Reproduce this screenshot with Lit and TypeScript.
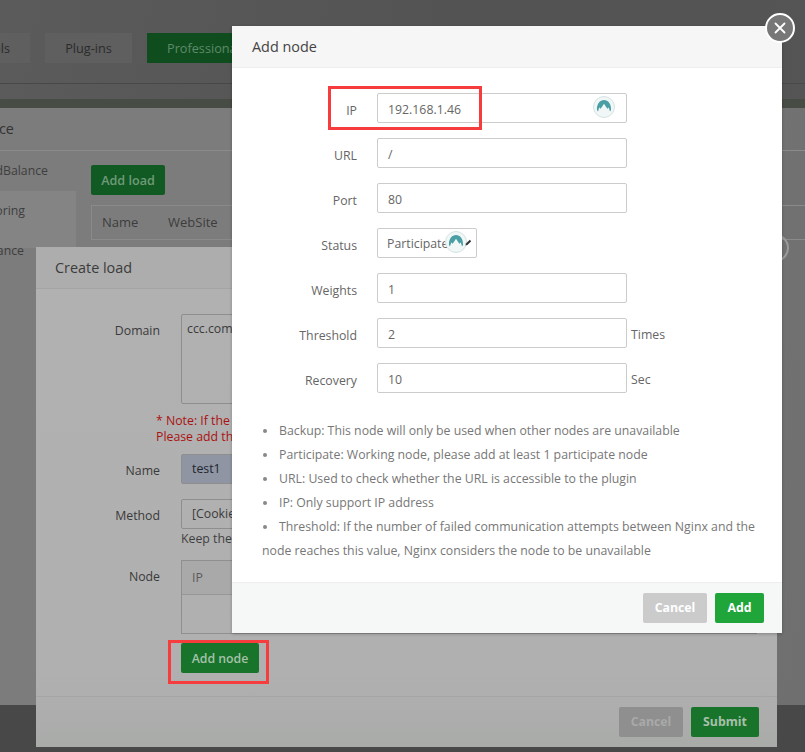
import { LitElement, html, css, svg } from "lit";
import { customElement } from "lit/decorators.js";

const ext = (cls: string) => html`<svg class=${cls} viewBox="0 0 22 22">
  <circle cx="11" cy="11" r="10.5" fill="#f1f6f6" stroke="#d5e3e3" stroke-width="1"></circle>
  ${svg`<path d="M4 14 C3.5 8 7 4 11 4 C15 4 18.5 8 18 14 L17 15.5 L15.8 11.5 L14.3 12.8 L11 7.8 L7.7 12.8 L6.2 11.5 L5 15.5 Z" fill="#4a9fa5"></path>`}
</svg>`;

@customElement("app-root")
export class AppRoot extends LitElement {
  static styles = css`
    :host { display: block; width: 805px; height: 752px; font-family: "Open Sans", "Liberation Sans", sans-serif; font-size: 12.3px; color: #666; }
    .stage { position: relative; width: 805px; height: 752px; overflow: hidden;
      background: linear-gradient(100deg, #5b5b5b 0, #535353 50%, #555 100%); }
    .nav { position: absolute; left: 0; top: 33px; width: 805px; height: 50px; box-sizing: content-box; border-bottom: 1px solid #484848; display: flex; gap: 15px; font-size: 12.7px; }
    .tab { height: 30px; line-height: 30px; background: #5f5f5f; color: #2b2b2b; text-align: center; white-space: nowrap; overflow: hidden; }
    .tab.t1 { width: 30px; display: flex; justify-content: flex-end; padding-right: 20px; box-sizing: border-box; }
    .tab.t2 { width: 87px; }
    .tab.t3 { background: #0f4d1f; color: #5e8a68; text-align: left; padding-left: 20px; box-sizing: border-box; width: 90px; }
    .strip { position: absolute; left: 0; top: 99px; width: 805px; height: 9px; background: #474c44; }
    .win { position: absolute; overflow: hidden; box-sizing: border-box; }
    .win1 { left: -60px; top: 108px; width: 900px; height: 597px; background: linear-gradient(100deg, #7c7c7c 0, #7c7c7c 40%, #6e6e6e 100%); color: #3c3c3c; }
    .win1 .head { height: 42px; border-bottom: 1px solid #8b8b8b; box-sizing: content-box; line-height: 41px; font-size: 14.4px; color: #333; white-space: nowrap; }
    .win1 .head span { margin-left: -15px; }
    .side { position: absolute; left: 0; top: 43px; width: 136px; }
    .side div { height: 40px; line-height: 40px; text-align: right; color: #3e3e3e; box-sizing: border-box; white-space: nowrap; }
    .side .s1 { padding-right: 28px; }
    .side .on { background: #848484; height: 57px; padding-right: 51px; line-height: 40px; }
    .side .s3 { margin-top: -17px; padding-right: 52px; }
    .add-load { position: absolute; left: 151px; top: 57px; width: 74px; height: 30px; background: #115a24; color: #6f9a78; border-radius: 2px; text-align: center; line-height: 31px; font-weight: 600; font-size: 12.6px; }
    .thead { position: absolute; left: 151px; top: 97px; width: 760px; height: 35px; border: 1px solid #8a8a8a; box-sizing: border-box; line-height: 33px; color: #3c3c3c; display: flex; font-size: 13px; }
    .thead span:first-child { margin-left: 10px; width: 66px; }
    .ring { position: absolute; left: 821px; top: 126px; width: 28px; height: 28px; border: 2px solid #9a9a9a; border-radius: 50%; box-sizing: border-box; }

    .win2 { left: 36px; top: 247px; width: 741px; height: 500px; background: linear-gradient(180deg, #b1b1b1 0, #b0b0b0 85%, #a9aba9 100%); display: flex; flex-direction: column; }
    .win2 .head { height: 42px; flex: none; box-sizing: border-box; border-bottom: 1px solid #a4a4a4; padding-left: 19px; line-height: 41px; font-size: 14.4px; color: #3b3b3b; background: #adadad; }
    .win2 .body { position: relative; flex: 1; }
    .lab { position: absolute; width: 124px; left: 0; text-align: right; color: #3a3a3a; line-height: 22px; }
    .box { position: absolute; left: 145px; border: 1px solid #8e8e8e; box-sizing: border-box; border-radius: 2px; padding-left: 10px; color: #3b3b3b; line-height: 28px; white-space: nowrap; overflow: hidden; }
    .ta { top: 25px; height: 90px; width: 300px; padding: 4px 5px; line-height: 20px; }
    .note { position: absolute; left: 120px; top: 124px; color: #aa1212; line-height: 16px; white-space: nowrap; }
    .name { top: 165px; height: 30px; width: 300px; background: #8f95a3; color: #22262e; }
    .method { top: 210px; height: 30px; width: 300px; }
    .keep { position: absolute; left: 145px; top: 240px; color: #3f3f3f; line-height: 20px; white-space: nowrap; }
    .node { position: absolute; left: 145px; top: 271px; width: 576px; height: 74px; border: 1px solid #8f8f8f; box-sizing: border-box; }
    .node .h { height: 34px; box-sizing: border-box; border-bottom: 1px solid #979797; padding-left: 10px; line-height: 33px; color: #5a5a5a; background: #a9a9a9; }
    .add-node { position: absolute; left: 145px; top: 354px; width: 78px; height: 30px; background: #17742a; color: #a6c2aa; font-weight: 600; border-radius: 2px; text-align: center; line-height: 32px; }
    .win2 .foot { height: 51px; flex: none; border-top: 1px solid #a3a6a3; display: flex; justify-content: flex-end; gap: 8px; padding: 10px 18px 0 0; box-sizing: border-box; }
    .btn { height: 30px; line-height: 30px; border-radius: 2px; text-align: center; font-weight: 700; }
    .c2 { width: 64px; background: #8f8f8f; color: #a9a9a9; }
    .s2 { width: 68px; background: #17742a; color: #a9c0ac; }
    .darkbar { position: absolute; left: 0; top: 705px; width: 805px; height: 47px; background: #484848; }

    .dlg { left: 232px; top: 26px; width: 550px; height: 607px; background: #fff; box-shadow: 0 1px 3px rgba(0,0,0,.25); display: flex; flex-direction: column; color: #666; }
    .dlg .head { height: 42px; flex: none; box-sizing: border-box; background: #f6f6f6; border-bottom: 1px solid #eee; padding-left: 20px; line-height: 41px; font-size: 14.4px; color: #444; }
    .form { flex: none; padding-top: 25px; display: flex; flex-direction: column; gap: 15px; }
    .row { display: flex; align-items: center; height: 30px; }
    .row label { width: 125px; text-align: right; color: #666; margin-right: 20px; margin-top: 4px; }
    .inp { position: relative; width: 250px; height: 30px; box-sizing: border-box; border: 1px solid #ccc; border-radius: 2px; padding-left: 10px; line-height: 31px; color: #666; }
    .sel { width: 100px; overflow: hidden; white-space: nowrap; padding-left: 9px; line-height: 30px; }
    .unit { margin-left: 4px; color: #666; margin-top: 2px; }
    .ic { position: absolute; width: 22px; height: 22px; top: 2px; }
    .ic.a { right: 11px; }
    .ic.b { left: 67px; top: 2px; }
    .pen { position: absolute; left: 87px; top: 10px; width: 7px; height: 7px; }
    ul { margin: 0; padding: 26px 20px 0 30px; list-style: none; flex: 1; }
    li { position: relative; line-height: 24px; color: #777; text-indent: 17px; }
    li::before { content: ""; position: absolute; left: 1px; top: 10px; width: 4px; height: 4px; border-radius: 50%; background: #888; }
    .dlg .foot { height: 51px; flex: none; background: #f6f8f8; border-top: 1px solid #eee; display: flex; justify-content: flex-end; gap: 8px; padding: 10px 18px 0 0; box-sizing: border-box; }
    .c1 { width: 64px; background: #cbcbcb; color: #fff; }
    .a1 { width: 49px; background: #20a53a; color: #fff; }
    .close { position: absolute; left: 765px; top: 13px; width: 30px; height: 30px; border-radius: 50%; background: #777; border: 2.5px solid #fff; box-sizing: border-box; display: flex; align-items: center; justify-content: center; }
    .close svg { width: 14px; height: 14px; }
    .mark { position: absolute; border: 3px solid #f63c3c; box-sizing: border-box; }
    .m2 { left: 168px; top: 640px; width: 101px; height: 44px; }
    .m3 { left: 328px; top: 86px; width: 154px; height: 44px; }
  `;

  render() {
    return html`<div class="stage">
      <div class="nav">
        <div class="tab t1">Tools</div><div class="tab t2">Plug-ins</div><div class="tab t3">Professional</div>
      </div>
      <div class="strip"></div>
      <div class="darkbar"></div>
      <div class="win win1">
        <div class="head"><span>Load balance</span></div>
        <div class="side"><div class="s1">LoadBalance</div><div class="on">Monitoring</div><div class="s3">Maintenance</div></div>
        <div class="add-load">Add load</div>
        <div class="thead"><span>Name</span><span>WebSite</span></div>
        <div class="ring"></div>
      </div>
      <div class="win win2">
        <div class="head">Create load</div>
        <div class="body">
          <div class="lab" style="top:31px">Domain</div>
          <div class="box ta">ccc.com</div>
          <div class="note">* Note: If the domain<br />Please add the domain</div>
          <div class="lab" style="top:171px">Name</div>
          <div class="box name">test1</div>
          <div class="lab" style="top:216px">Method</div>
          <div class="box method">[Cookie] Same IP</div>
          <div class="keep">Keep the session</div>
          <div class="lab" style="top:277px">Node</div>
          <div class="node"><div class="h">IP</div></div>
          <div class="add-node">Add node</div>
        </div>
        <div class="foot"><div class="btn c2">Cancel</div><div class="btn s2">Submit</div></div>
      </div>
      <div class="win dlg">
        <div class="head">Add node</div>
        <div class="form">
          <div class="row"><label>IP</label><div class="inp">192.168.1.46${ext("ic a")}</div></div>
          <div class="row"><label>URL</label><div class="inp">/</div></div>
          <div class="row"><label>Port</label><div class="inp">80</div></div>
          <div class="row"><label>Status</label><div class="inp sel">Participate${ext("ic b")}<svg class="pen" viewBox="0 0 7 7"><path d="M0.5 6.5 L1 4.6 L4.8 0.8 L6.2 2.2 L2.4 6 Z" fill="#333"></path></svg></div></div>
          <div class="row"><label>Weights</label><div class="inp">1</div></div>
          <div class="row"><label>Threshold</label><div class="inp">2</div><span class="unit">Times</span></div>
          <div class="row"><label>Recovery</label><div class="inp">10</div><span class="unit">Sec</span></div>
        </div>
        <ul>
          <li>Backup: This node will only be used when other nodes are unavailable</li>
          <li>Participate: Working node, please add at least 1 participate node</li>
          <li>URL: Used to check whether the URL is accessible to the plugin</li>
          <li>IP: Only support IP address</li>
          <li>Threshold: If the number of failed communication attempts between Nginx and the node reaches this value, Nginx considers the node to be unavailable</li>
        </ul>
        <div class="foot"><div class="btn c1">Cancel</div><div class="btn a1">Add</div></div>
      </div>
      <div class="close"><svg viewBox="0 0 14 14"><path d="M2.5 2.5 L11.5 11.5 M11.5 2.5 L2.5 11.5" stroke="#fff" stroke-width="1.8" stroke-linecap="round"></path></svg></div>
      <div class="mark m3"></div>
      <div class="mark m2"></div>
    </div>`;
  }
}
